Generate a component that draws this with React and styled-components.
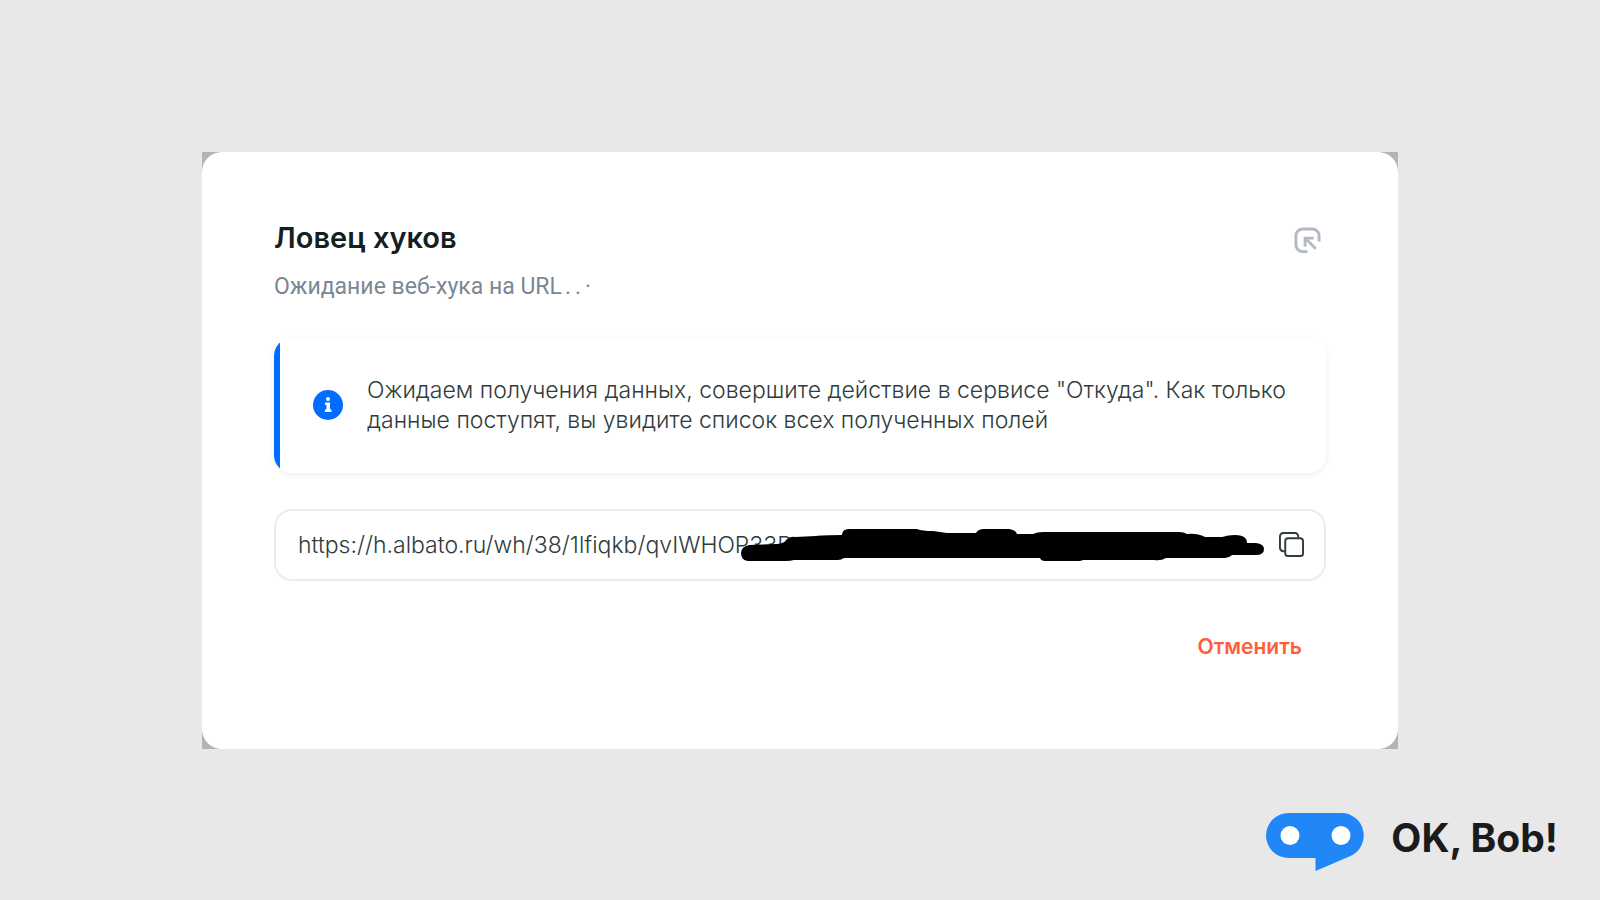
import React, { useState } from "react";
import styled, { createGlobalStyle } from "styled-components";

const GlobalStyle = createGlobalStyle`
  * {
    box-sizing: border-box;
  }

  body {
    margin: 0;
    background: #e8e8e8;
    font-family: Inter, "Liberation Sans", sans-serif;
  }
`;

const Page = styled.div`
  display: grid;
  grid-template-rows: 1fr auto 1fr;
  min-height: 100vh;
`;

const Backdrop = styled.main`
  grid-row: 2;
  justify-self: center;
  width: 100%;
  max-width: 1196px;
  background: #b0b4b4;
`;

const Card = styled.section`
  padding: 68px 72px 84px;
  border-radius: 20px;
  background: #fff;
`;

const CardHeader = styled.header`
  display: flex;
  justify-content: space-between;
  align-items: flex-start;
`;

const Title = styled.h1`
  margin: 0;
  color: #14201f;
  font-size: 29px;
  font-weight: 600;
  line-height: 36px;
`;

const Subtitle = styled.p`
  margin: 12px 0 0;
  color: #7b8794;
  font-family: Roboto, "Liberation Sans", sans-serif;
  font-size: 23px;
  line-height: 38px;
`;

const Dots = styled.span`
  margin-left: 3px;
  letter-spacing: 4px;
`;

const IconButton = styled.button`
  display: flex;
  flex: none;
  padding: ${(props) => props.$padding || "0"};
  border: none;
  background: none;
  color: ${(props) => props.$color};
  cursor: pointer;
`;

const Notice = styled.div`
  display: flex;
  align-items: center;
  gap: 24px;
  margin-top: 32px;
  padding: 37px 40px 38px 39px;
  border-radius: 18px;
  background: linear-gradient(to right, #006dff 6px, #fff 6px);
  box-shadow: 0 2px 6px rgba(0, 0, 0, 0.08);
`;

const NoticeIcon = styled.svg`
  flex: none;
`;

const NoticeText = styled.p`
  margin: 0;
  color: #2f3c3c;
  font-size: 23px;
  font-weight: 300;
  line-height: 30px;
`;

const UrlField = styled.div`
  display: flex;
  align-items: center;
  gap: 12px;
  position: relative;
  height: 72px;
  margin-top: 36px;
  padding: 0 20px 0 22px;
  border: 2px solid #ececef;
  border-radius: 18px;
`;

const UrlInput = styled.input`
  flex: 1;
  min-width: 0;
  padding: 0;
  border: none;
  outline: none;
  background: none;
  color: #2f3c3c;
  font-family: inherit;
  font-size: 23px;
  font-weight: 300;
`;

const Redaction = styled.svg`
  position: absolute;
  top: 18px;
  right: 59px;
`;

const Actions = styled.div`
  display: flex;
  justify-content: flex-end;
  margin-top: 48px;
`;

const CancelButton = styled.button`
  padding: 0 24px;
  border: none;
  background: none;
  color: #ff5f38;
  font-family: inherit;
  font-size: 21px;
  font-weight: 600;
  line-height: 36px;
  cursor: pointer;
`;

const Footer = styled.footer`
  grid-row: 3;
  display: flex;
  justify-content: flex-end;
  align-items: flex-end;
  gap: 26px;
  padding: 0 42px 29px;
`;

const Brand = styled.span`
  color: #1b1b1b;
  font-size: 39px;
  font-weight: 700;
  line-height: 66px;
`;

function OpenIcon() {
  return (
    <svg width="27" height="27" viewBox="0 0 28 28" fill="none" stroke="currentColor" strokeWidth="3">
      <path d="M14 25.500H9a7 7 0 0 1-7-7V9a7 7 0 0 1 7-7h10a7 7 0 0 1 7 7v6" />
      <path d="M11.500 20.500V11.500H20.500M11.500 11.500l11 11" />
    </svg>
  );
}

function CopyIcon() {
  return (
    <svg width="25" height="25" viewBox="0 0 26 26" fill="none" stroke="currentColor" strokeWidth="2">
      <path d="M6 20H4.500A3.500 3.500 0 0 1 1 16.500V4.500A3.500 3.500 0 0 1 4.500 1h12A3.500 3.500 0 0 1 20 4.500V6" />
      <rect x="6.500" y="6.500" width="18.500" height="18.500" rx="3" />
    </svg>
  );
}

function InfoIcon() {
  return (
    <NoticeIcon width="30" height="30" viewBox="0 0 30 30" aria-hidden="true">
      <circle cx="15" cy="15" r="15" fill="#006dff" />
      <circle cx="15" cy="9" r="2" fill="#fff" />
      <path d="M12 12.500h5v7h1.500v2.500H12v-2.500h1.500V15H12z" fill="#fff" />
    </NoticeIcon>
  );
}

function BobLogo() {
  return (
    <svg width="99" height="58" viewBox="0 0 99 58" aria-hidden="true">
      <path
        d="M22.500 0h53a22.500 22.500 0 0 1 9 43L49.500 58V45h-27a22.500 22.500 0 0 1 0-45z"
        fill="#2187f7"
      />
      <circle cx="24" cy="22.500" r="9.500" fill="#fff" />
      <circle cx="75" cy="22.500" r="9.500" fill="#fff" />
    </svg>
  );
}

function Scribble() {
  return (
    <Redaction width="524" height="32" viewBox="0 0 524 32" aria-hidden="true">
      <path d="M8 16L36 15Q44 14 45 11Q49 7 54 8L75 7Q80 6 101 6Q101 0 108 0H176Q181 2 192 2Q199 3 206 4H235Q237 0 243 0H268Q275 1 276 5H292Q296 3 302 3H438Q443 3 446 5Q456 4 464 8H481Q487 6 494 6Q506 6 506 14H515Q523 15 523 20Q523 26 515 26H491Q488 29 484 29H425Q420 32 413 31H342Q338 33 332 32H304Q300 32 299 29H103Q100 31 97 31H53Q50 32 44 32H7Q0 31 0 24Q0 18 8 16z" />
    </Redaction>
  );
}

export default function App() {
  const [url, setUrl] = useState("https://h.albato.ru/wh/38/1lfiqkb/qvIWHOP33P");

  return (
    <>
      <GlobalStyle />
      <Page>
        <Backdrop>
          <Card>
            <CardHeader>
              <div>
                <Title>Ловец хуков</Title>
                <Subtitle>
                  Ожидание веб-хука на URL<Dots>..·</Dots>
                </Subtitle>
              </div>
              <IconButton type="button" aria-label="Открыть" $color="#b4b9c4" $padding="7px 5px">
                <OpenIcon />
              </IconButton>
            </CardHeader>

            <Notice>
              <InfoIcon />
              <NoticeText>
                Ожидаем получения данных, совершите действие в сервисе "Откуда". Как только данные
                поступят, вы увидите список всех полученных полей
              </NoticeText>
            </Notice>

            <UrlField>
              <UrlInput
                type="text"
                aria-label="URL"
                value={url}
                onChange={(event) => setUrl(event.target.value)}
              />
              <Scribble />
              <IconButton type="button" aria-label="Скопировать" $color="#2f3c3c">
                <CopyIcon />
              </IconButton>
            </UrlField>

            <Actions>
              <CancelButton type="button">Отменить</CancelButton>
            </Actions>
          </Card>
        </Backdrop>

        <Footer>
          <BobLogo />
          <Brand>OK, Bob!</Brand>
        </Footer>
      </Page>
    </>
  );
}
